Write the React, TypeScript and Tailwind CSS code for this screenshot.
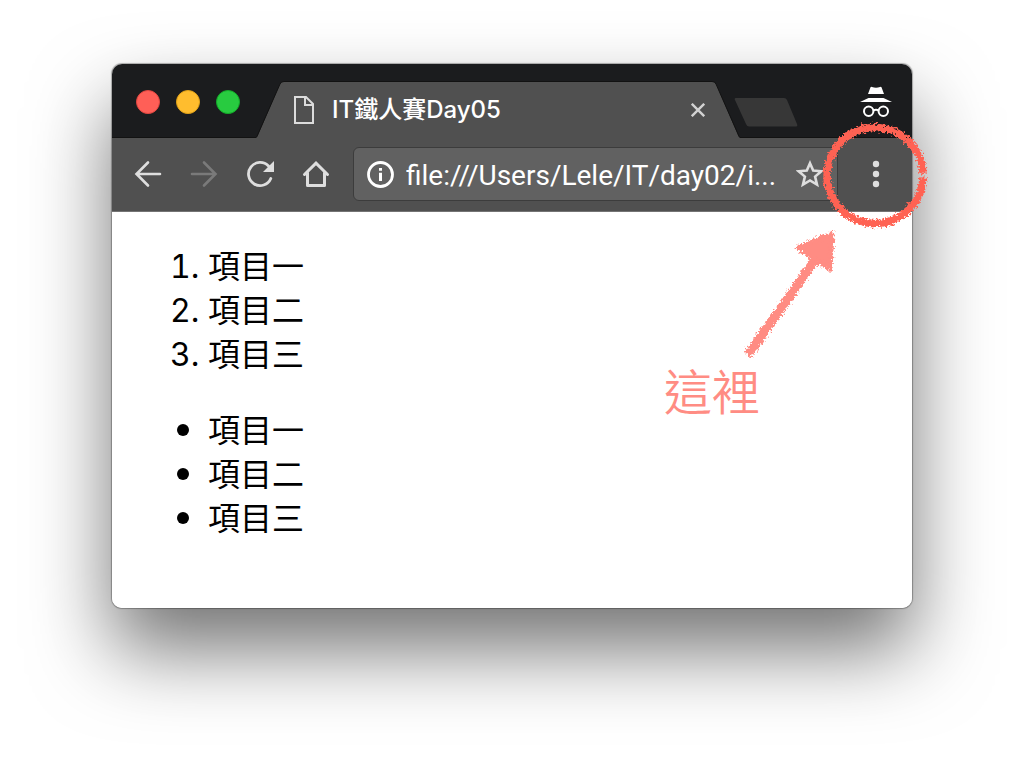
const items = ["項目一", "項目二", "項目三"];

const navButton = "flex h-14 w-14 items-center justify-center text-[#dedede]";

function TitleBar() {
  return (
    <div className="flex h-[74px] items-start rounded-t-[10px] bg-[#1b1c1e] pl-6 pr-5 shadow-[inset_0_-1px_#121212]">
      <div className="mt-[26px] flex gap-4">
        <button aria-label="Close" className="h-6 w-6 rounded-full border border-[#e2463f] bg-[#ff5f57]" />
        <button aria-label="Minimize" className="h-6 w-6 rounded-full border border-[#e1a116] bg-[#ffbd2e]" />
        <button aria-label="Zoom" className="h-6 w-6 rounded-full border border-[#12ac28] bg-[#28cb40]" />
      </div>
      <div className="ml-4 mt-[17px] flex h-[57px] min-w-0 flex-1">
        <svg viewBox="0 0 28 57" className="h-[57px] w-7 shrink-0" aria-hidden="true">
          <path d="M0 57Q1 56 2 54L24 3Q25 0.500 28 0.500V57Z" fill="#505050" />
          <path d="M0 56.500Q1 56 2 53L24 3Q25 0.500 28 0.500" fill="none" stroke="#121212" />
        </svg>
        <div className="flex min-w-0 flex-1 items-center border-t border-[#121212] bg-[#505050] pl-[10px] pr-[7px]">
          <svg viewBox="0 0 20 28" className="h-7 w-5 shrink-0" fill="none" stroke="#dcdcdc" strokeWidth="2" aria-hidden="true">
            <path d="M1 1H12L19 8V27H1Z" />
            <path d="M11 1V9H19" />
          </svg>
          <span className="ml-[18px] min-w-0 flex-1 truncate font-[Inter,'Noto_Sans_CJK_TC',sans-serif] text-2xl font-medium text-white">
            IT鐵人賽Day05
          </span>
          <button aria-label="Close tab" className="shrink-0">
            <svg viewBox="0 0 14 14" className="h-[14px] w-[14px]" fill="none" stroke="#d2d2d2" strokeWidth="2.400">
              <path d="M0.800 0.800L13.200 13.200M13.200 0.800L0.800 13.200" />
            </svg>
          </button>
        </div>
        <svg viewBox="0 0 28 57" className="h-[57px] w-7 shrink-0" aria-hidden="true">
          <path d="M28 57Q27 56 26 54L4 3Q3 0.500 0 0.500V57Z" fill="#505050" />
          <path d="M28 56.500Q27 56 26 53L4 3Q3 0.500 0 0.500" fill="none" stroke="#121212" />
        </svg>
      </div>
      <button aria-label="New tab" className="-ml-[6px] mt-[33px] shrink-0">
        <svg viewBox="0 0 64 30" className="h-[30px] w-16">
          <path d="M2 1H50Q52 1 53 3L63 27Q64 29.500 62 29.500H15Q13 29.500 12 27L1 3Q0 1 2 1Z" fill="#373737" />
        </svg>
      </button>
      <svg viewBox="0 0 32 32" className="ml-[62px] mt-[22px] h-8 w-8 shrink-0" role="img" aria-label="Incognito">
        <path d="M10.500 1.200Q11 0.600 12 1Q16 2.600 20 1Q21 0.600 21.500 1.200L24 8H8Z" fill="#fff" />
        <path d="M8.500 12H23.500L32 16H0Z" fill="#fff" />
        <g fill="none" stroke="#fff" strokeWidth="2">
          <circle cx="8.700" cy="25.200" r="4.700" />
          <circle cx="23.300" cy="25.200" r="4.700" />
          <path d="M13.200 24.500Q16 23 18.800 24.500" />
        </g>
      </svg>
    </div>
  );
}

function Toolbar() {
  return (
    <div className="relative z-10 flex h-[74px] items-center border-b border-[#747474] bg-[#505050] pb-px pl-2">
      <button aria-label="Back" className={navButton}>
        <svg viewBox="0 0 28 28" className="h-7 w-7" fill="none" stroke="currentColor" strokeWidth="2.600" strokeLinecap="round">
          <path d="M26 14H3M14 2.500L2.500 14L14 25.500" />
        </svg>
      </button>
      <button aria-label="Forward" disabled className="flex h-14 w-14 items-center justify-center text-[#7a7a7a]">
        <svg viewBox="0 0 28 28" className="h-7 w-7" fill="none" stroke="currentColor" strokeWidth="2.600" strokeLinecap="round">
          <path d="M2 14H25M14 2.500L25.500 14L14 25.500" />
        </svg>
      </button>
      <button aria-label="Reload" className={navButton}>
        <svg viewBox="0 0 28 28" className="h-7 w-7" fill="none" stroke="currentColor" strokeWidth="2.800" strokeLinecap="round">
          <path d="M24.800 18.500A11.600 11.600 0 1 1 22.500 6" />
          <path d="M28 1V12H17Z" fill="currentColor" stroke="none" />
        </svg>
      </button>
      <button aria-label="Home" className={navButton}>
        <svg viewBox="0 0 28 28" className="h-7 w-7" fill="none" stroke="currentColor" strokeWidth="3" strokeLinecap="round">
          <path d="M2.500 14.500L14 3.200L25.500 14.500" />
          <path d="M5.500 13V25.500H22.500V13" strokeLinejoin="round" />
        </svg>
      </button>
      <div className="ml-[9px] flex h-[54px] min-w-0 flex-1 items-center rounded-md border border-[#3c3c3c] bg-[#616161] pl-3 pr-[13px]">
        <svg viewBox="0 0 28 28" className="h-7 w-7 shrink-0" aria-hidden="true">
          <circle cx="14.500" cy="14.500" r="12" fill="none" stroke="#fff" strokeWidth="2.800" />
          <path d="M13 8H16V10.800H13ZM13 12.800H16V21H13Z" fill="#fff" />
        </svg>
        <input
          aria-label="Address"
          className="ml-3 min-w-0 flex-1 bg-transparent pt-1 text-[28px] leading-9 text-white outline-none"
          defaultValue="file:///Users/Lele/IT/day02/i..."
        />
        <button aria-label="Bookmark this page" className="shrink-0">
          <svg viewBox="0 0 28 28" className="h-7 w-7" fill="none" stroke="#dedede" strokeWidth="2.600">
            <path d="M14 3.200L17.200 10.600L25.300 11.300L19.100 16.600L21 24.600L14 20.400L7 24.600L8.900 16.600L2.700 11.300L10.800 10.600Z" />
          </svg>
        </button>
      </div>
      <div className="relative w-[74px] shrink-0">
        <button aria-label="Menu" className="flex h-14 w-full items-center justify-center pl-0.5">
          <svg viewBox="0 0 28 28" className="h-7 w-7" fill="#dedede">
            <circle cx="14" cy="4" r="3.200" />
            <circle cx="14" cy="14" r="3.200" />
            <circle cx="14" cy="24" r="3.200" />
          </svg>
        </button>
        <svg viewBox="0 0 112 112" className="pointer-events-none absolute -left-[17px] -top-[26px] h-28 w-28 max-w-none" aria-hidden="true">
          <path
            d="M102 53.500A48 48 0 1 0 102 57.500"
            fill="none"
            stroke="#ff6253"
            strokeWidth="7.500"
            filter="url(#crayon)"
          />
        </svg>
      </div>
    </div>
  );
}

function Hint() {
  return (
    <div className="absolute right-[76px] top-4 w-[172px]">
      <svg viewBox="0 0 172 136" className="w-full" aria-hidden="true">
        <g filter="url(#crayon)" fill="#ff8c83" stroke="#ff8c83">
          <path d="M84 127L151 32" strokeWidth="9" />
          <path d="M168 6L134 20L166 41Z" strokeWidth="5" strokeLinejoin="round" />
        </g>
      </svg>
      <p className="mt-[6px] text-5xl leading-[48px] font-[350] text-[#ff8c83]">這裡</p>
    </div>
  );
}

export default function App() {
  return (
    <main className="min-h-screen bg-white px-28 pt-16 pb-40 font-[Roboto,'Noto_Sans_CJK_TC',sans-serif]">
      <svg className="absolute h-0 w-0" aria-hidden="true">
        <filter id="crayon" x="-10%" y="-10%" width="120%" height="120%">
          <feTurbulence type="fractalNoise" baseFrequency="0.45" numOctaves="3" seed="4" />
          <feDisplacementMap in="SourceGraphic" scale="8" xChannelSelector="R" yChannelSelector="G" />
        </filter>
      </svg>
      <div className="rounded-[10px] shadow-[0_0_1px_1px_rgba(0,0,0,0.3),0_42px_80px_rgba(0,0,0,0.55)]">
        <TitleBar />
        <Toolbar />
        <div className="relative rounded-b-[10px] bg-white pt-[33px] pb-[67px] pl-24 text-[32px] leading-[44px] text-black">
          <ol className="list-decimal font-[Inter,'Noto_Sans_CJK_TC',sans-serif]">
            {items.map((item) => (
              <li key={item}>{item}</li>
            ))}
          </ol>
          <ul className="mt-8 list-disc font-[Inter,'Noto_Sans_CJK_TC',sans-serif] marker:text-[38px] marker:leading-none">
            {items.map((item) => (
              <li key={item} className="pl-0">{item}</li>
            ))}
          </ul>
          <Hint />
        </div>
      </div>
    </main>
  );
}
